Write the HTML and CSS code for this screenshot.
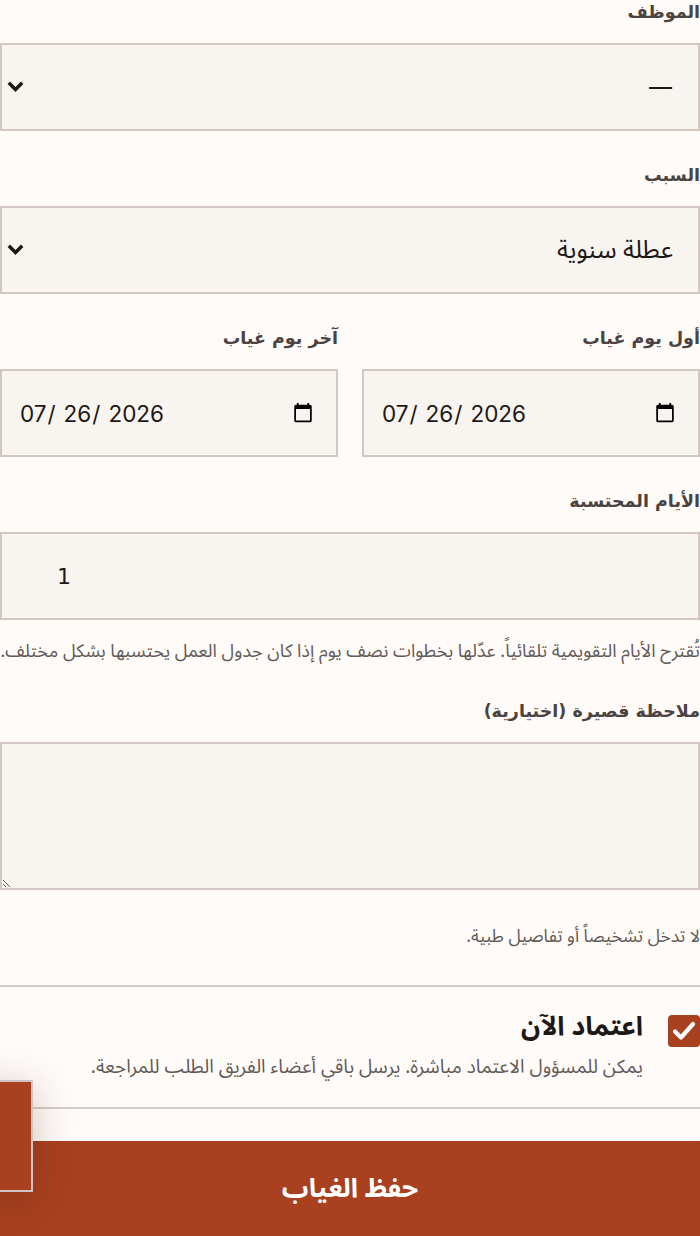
FILE: index.html
```html
<!DOCTYPE html>
<html lang="ar" dir="rtl">
<head>
<meta charset="utf-8">
<link rel="stylesheet" href="styles.css">
</head>
<body>
<form class="form">
  <div class="field">
    <label class="label">الموظف</label>
    <div class="select-wrap">
      <select class="control select"><option>—</option></select>
      <svg class="chev" viewBox="0 0 17 11" width="17" height="11"><path d="M1.8 1.8 L8.5 8.5 L15.2 1.8" fill="none" stroke="#1d1816" stroke-width="3.4"/></svg>
    </div>
  </div>
  <div class="field">
    <label class="label">السبب</label>
    <div class="select-wrap">
      <select class="control select"><option>عطلة سنوية</option></select>
      <svg class="chev" viewBox="0 0 17 11" width="17" height="11"><path d="M1.8 1.8 L8.5 8.5 L15.2 1.8" fill="none" stroke="#1d1816" stroke-width="3.4"/></svg>
    </div>
  </div>
  <div class="field row">
    <div class="col">
      <label class="label">أول يوم غياب</label>
      <input class="control date" type="date" value="2026-07-26">
    </div>
    <div class="col">
      <label class="label">آخر يوم غياب</label>
      <input class="control date" type="date" value="2026-07-26">
    </div>
  </div>
  <div class="field">
    <label class="label">الأيام المحتسبة</label>
    <input class="control number" type="number" value="1">
    <p class="help help-first">تُقترح الأيام التقويمية تلقائياً. عدّلها بخطوات نصف يوم إذا كان جدول العمل يحتسبها بشكل مختلف.</p>
  </div>
  <div class="field">
    <label class="label">ملاحظة قصيرة (اختيارية)</label>
    <textarea class="control textarea"></textarea>
    <p class="help help-note">لا تدخل تشخيصاً أو تفاصيل طبية.</p>
  </div>
  <div class="approve">
    <div class="check"><svg viewBox="0 0 32 32" width="32" height="32"><rect width="32" height="32" rx="4" fill="#a9401f"/><path d="M7 16.5 L13 22.5 L25 9" fill="none" stroke="#fff" stroke-width="4.2" stroke-linecap="round" stroke-linejoin="round"/></svg></div>
    <div class="approve-text">
      <div class="approve-title">اعتماد الآن</div>
      <div class="approve-desc">يمكن للمسؤول الاعتماد مباشرة. يرسل باقي أعضاء الفريق الطلب للمراجعة.</div>
    </div>
  </div>
</form>
<div class="footer">
  <button class="save" type="button">حفظ الغياب</button>
</div>
<div class="float-panel"></div>
</body>
</html>
```
FILE: styles.css
```css
html, body {
  margin: 0;
  padding: 0;
  background: #fffbf9;
}
body {
  font-family: "Noto Sans Arabic", "Noto Sans", sans-serif;
  color: #1d1816;
  height: 1236px;
  overflow: hidden;
}
.form {
  display: flex;
  flex-direction: column;
}
.field {
  margin-bottom: 32px;
}
.label {
  display: block;
  font-family: "DejaVu Sans", sans-serif;
  font-weight: bold;
  font-size: 17.5px;
  line-height: 24px;
  color: #4a4341;
  margin-bottom: 19px;
}
.control {
  display: block;
  box-sizing: border-box;
  width: 100%;
  margin: 0;
  background: #f8f4ef;
  border: 2px solid #d3c7c2;
  border-radius: 0;
  height: 88px;
  color: #1d1816;
  outline: none;
}
.select-wrap {
  position: relative;
}
.select {
  appearance: none;
  -webkit-appearance: none;
  font-family: "Noto Sans Arabic", "Noto Sans", sans-serif;
  font-size: 25px;
  padding: 0 25px 0 40px;
}
.chev {
  position: absolute;
  left: 7px;
  top: 38px;
}
.row {
  display: flex;
  gap: 24px;
}
.row .col {
  flex: 1;
  min-width: 0;
}
.date {
  direction: ltr;
  font-family: "Inter", sans-serif;
  font-size: 22.5px;
  padding: 0 20px 0 17px;
}
.date::-webkit-datetime-edit-text {
  padding: 0 7px 0 0;
}
.number {
  direction: ltr;
  font-family: "DejaVu Sans", sans-serif;
  font-size: 22px;
  padding: 0 18px 0 55px;
  -moz-appearance: textfield;
}
.number::-webkit-inner-spin-button,
.number::-webkit-outer-spin-button {
  -webkit-appearance: none;
  margin: 0;
}
.textarea {
  height: 148px;
  resize: vertical;
  font-family: inherit;
  font-size: 18px;
}
.help {
  margin: 18px 0 0 0;
  font-size: 17.5px;
  line-height: 26px;
  color: #625a57;
  white-space: nowrap;
}
.help-first {
  font-size: 18.1px;
  margin-bottom: 3px;
}
.help-note {
  margin-top: 34px;
  margin-bottom: 3px;
}
.approve {
  border-top: 2px solid #d3cbc7;
  border-bottom: 2px solid #d3cbc7;
  padding: 28px 0 26px 0;
  display: flex;
  align-items: flex-start;
  gap: 25px;
}
.check {
  width: 32px;
  height: 32px;
  flex: none;
}
.check svg { display: block; }
.approve-text {
  margin-top: -4px;
}
.approve-title {
  font-weight: bold;
  font-size: 26.5px;
  line-height: 32px;
  color: #1d1816;
}
.approve-desc {
  margin-top: 10px;
  font-size: 19px;
  line-height: 28px;
  color: #625a57;
}
.footer {
  position: fixed;
  left: 0;
  right: 0;
  bottom: 0;
  height: 95px;
  box-shadow: 0 -10px 24px rgba(255, 251, 249, 0.9);
}
.save {
  display: block;
  width: 100%;
  height: 95px;
  border: 0;
  margin: 0;
  background: #a9401f;
  color: #fff;
  font-family: "Noto Sans Arabic", "Noto Sans", sans-serif;
  font-weight: bold;
  font-size: 26.5px;
}
.float-panel {
  position: fixed;
  left: -100px;
  top: 1080px;
  width: 129px;
  height: 108px;
  background: #a9401f;
  border: 2px solid #cfc6c2;
  box-shadow: 0 8px 40px rgba(60, 30, 20, 0.25);
}
```
